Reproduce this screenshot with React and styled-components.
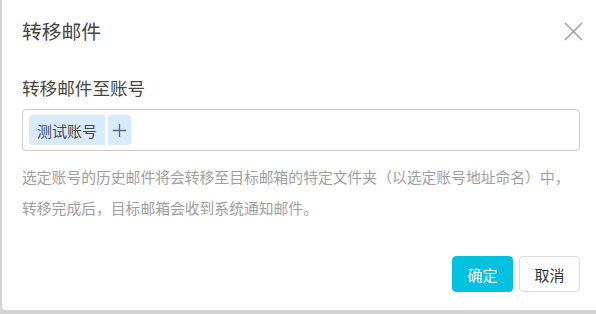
import React from "react";
import styled, { createGlobalStyle } from "styled-components";

const Global = createGlobalStyle`
  html, body { margin: 0; padding: 0; background: #d3d3d3; }
  body { font-family: "Noto Sans CJK SC", "Noto Sans", sans-serif; }
`;

const Dialog = styled.div`
  margin-left: 2px;
  width: 600px;
  height: 310px;
  background: #fff;
  border-radius: 0 0 0 4px;
  display: flex;
  flex-direction: column;
  box-sizing: border-box;
  padding: 17px 16px 18px 20px;
`;

const Header = styled.div`
  display: flex;
  align-items: center;
  justify-content: space-between;
  width: 561px;
`;

const Title = styled.div`
  font-size: 19.8px;
  line-height: 28px;
  color: #454545;
`;

const Close = styled.button`
  border: 0;
  background: none;
  padding: 0;
  width: 20px;
  height: 20px;
  display: flex;
  align-items: center;
  justify-content: center;
  cursor: pointer;
`;

const Label = styled.div`
  margin-top: 31px;
  font-size: 17.6px;
  line-height: 24px;
  color: #454545;
`;

const TagInput = styled.div`
  margin-top: 9px;
  width: 558px;
  height: 42px;
  box-sizing: border-box;
  border: 1px solid #cccccc;
  border-radius: 4px;
  padding: 5px 6px;
  display: flex;
  align-items: center;
  gap: 3px;
`;

const Tag = styled.span`
  height: 30px;
  display: flex;
  align-items: center;
  padding: 0 8px;
  background: #d8ebfc;
  border-radius: ${(p) => p.$radius};
  font-size: 15px;
  color: #4a4a4a;
`;

const AddTag = styled(Tag)`
  width: 23px;
  padding: 0;
  justify-content: center;
`;

const Desc = styled.p`
  margin: 10px 0 0;
  font-size: 14.8px;
  line-height: 31px;
  color: #9e9e9e;
  width: 562px;
`;

const Footer = styled.div`
  margin-top: auto;
  display: flex;
  justify-content: flex-end;
  gap: 6px;
  width: 558px;
`;

const Button = styled.button`
  height: 36px;
  min-width: 61px;
  padding: 0 14px;
  box-sizing: border-box;
  border-radius: 4px;
  font-family: inherit;
  font-size: 15px;
  border: 1px solid ${(p) => (p.$primary ? "#00c1de" : "#dcdcdc")};
  background: ${(p) => (p.$primary ? "#00c1de" : "#fff")};
  color: ${(p) => (p.$primary ? "#fff" : "#333")};
  cursor: pointer;
`;

export default function App() {
  return (
    <>
      <Global />
      <Dialog>
        <Header>
          <Title>转移邮件</Title>
          <Close aria-label="close">
            <svg width="19" height="19" viewBox="0 0 19 19">
              <path d="M1 1L18 18M18 1L1 18" stroke="#9b9b9b" strokeWidth="1.4" fill="none" />
            </svg>
          </Close>
        </Header>
        <Label>转移邮件至账号</Label>
        <TagInput>
          <Tag $radius="4px 0 0 4px">测试账号</Tag>
          <AddTag $radius="0 4px 4px 0">
            <svg width="13" height="13" viewBox="0 0 13 13">
              <path d="M6.5 0V13M0 6.5H13" stroke="#666" strokeWidth="1.3" fill="none" />
            </svg>
          </AddTag>
        </TagInput>
        <Desc>
          选定账号的历史邮件将会转移至目标邮箱的特定文件夹（以选定账号地址命名）中，
          <br />
          转移完成后，目标邮箱会收到系统通知邮件。
        </Desc>
        <Footer>
          <Button $primary>确定</Button>
          <Button>取消</Button>
        </Footer>
      </Dialog>
    </>
  );
}
